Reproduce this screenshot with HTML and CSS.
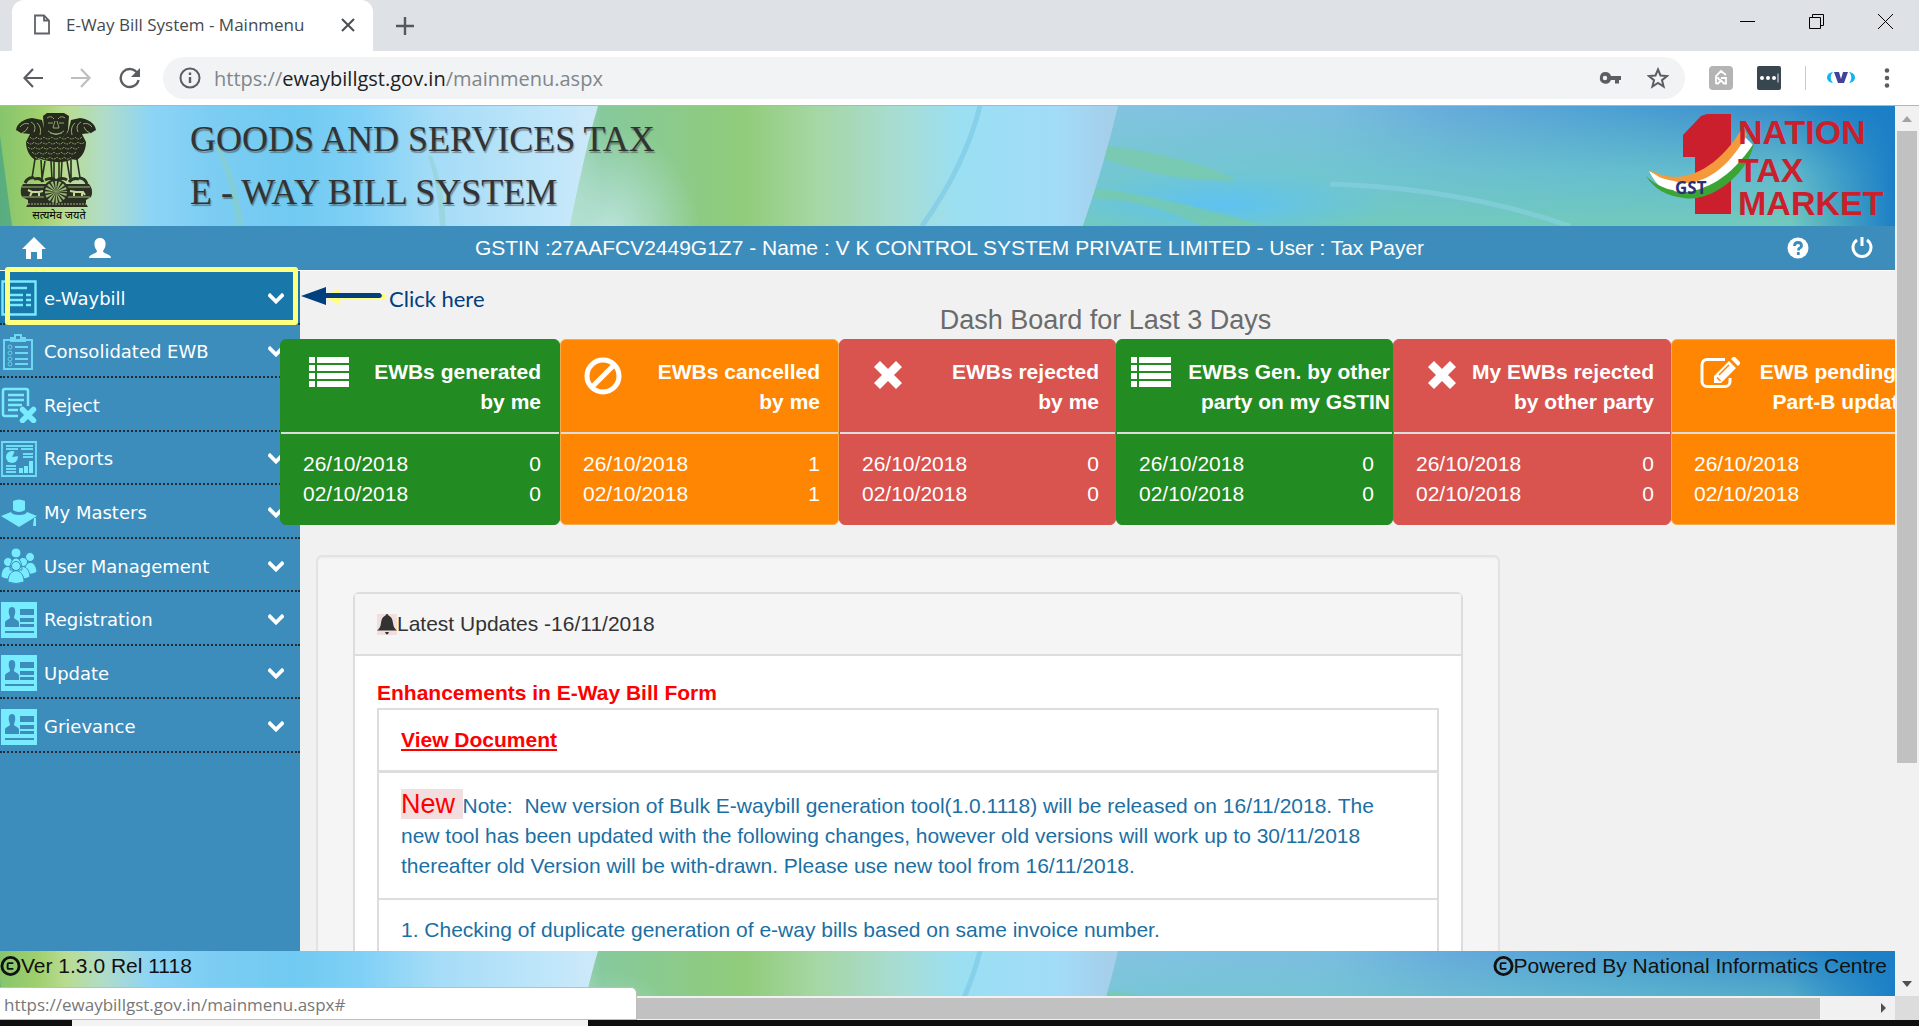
FILE: index.html
```html
<!DOCTYPE html>
<html lang="en">
<head>
    <meta charset="UTF-8">
    <title>E-Way Bill System - Mainmenu</title>
    <link rel="stylesheet" href="styles.css">
</head>
<body>
    <svg class="defs" width="0" height="0" aria-hidden="true">
        <defs>
            <linearGradient id="sky-base" gradientUnits="userSpaceOnUse" x1="0" y1="0" x2="1895" y2="0">
                <stop offset="0" stop-color="#86c56c"/>
                <stop offset=".02" stop-color="#a0cf6c"/>
                <stop offset=".035" stop-color="#b9dc92"/>
                <stop offset=".055" stop-color="#b0dcc8"/>
                <stop offset=".08" stop-color="#8cd4f6"/>
                <stop offset=".11" stop-color="#7dcdf3"/>
                <stop offset=".155" stop-color="#70caf1"/>
                <stop offset=".19" stop-color="#7fd0f6"/>
                <stop offset=".23" stop-color="#a5dcf7"/>
                <stop offset=".29" stop-color="#c0e6fa"/>
                <stop offset=".315" stop-color="#cde9f8"/>
            </linearGradient>
            <linearGradient id="sky-green" gradientUnits="userSpaceOnUse" x1="570" y1="0" x2="1110" y2="0">
                <stop offset="0" stop-color="#a4d8c4"/>
                <stop offset=".06" stop-color="#86c99c"/>
                <stop offset=".32" stop-color="#90cc7a"/>
                <stop offset=".45" stop-color="#a5d6a2"/>
                <stop offset=".6" stop-color="#a8dcd0"/>
                <stop offset=".72" stop-color="#9adff2"/>
                <stop offset=".9" stop-color="#a2dcf8"/>
                <stop offset="1" stop-color="#a5cfea"/>
            </linearGradient>
            <linearGradient id="sky-right" gradientUnits="userSpaceOnUse" x1="1090" y1="0" x2="1895" y2="0">
                <stop offset="0" stop-color="#84c4e2"/>
                <stop offset=".3" stop-color="#7abde0"/>
                <stop offset=".45" stop-color="#66aadc"/>
                <stop offset=".65" stop-color="#4c9fd4"/>
                <stop offset=".85" stop-color="#388ecb"/>
                <stop offset="1" stop-color="#147cc6"/>
            </linearGradient>
            <linearGradient id="sky-teal" x1="0" y1="0" x2="0" y2="1">
                <stop offset="0" stop-color="#6ec8c6" stop-opacity="0"/>
                <stop offset=".55" stop-color="#6ec8cc" stop-opacity=".75"/>
                <stop offset="1" stop-color="#72cabc"/>
            </linearGradient>
            <radialGradient id="sky-pale">
                <stop offset="0" stop-color="#bce4dc"/>
                <stop offset="1" stop-color="#bce4dc" stop-opacity="0"/>
            </radialGradient>
            <linearGradient id="sky-edge" x1="0" y1="0" x2="1" y2="0">
                <stop offset="0" stop-color="#1c7fc6" stop-opacity="0"/>
                <stop offset="1" stop-color="#1c7fc6"/>
            </linearGradient>
            <radialGradient id="sky-glow">
                <stop offset="0" stop-color="#5ec2f2"/>
                <stop offset="1" stop-color="#5ec2f2" stop-opacity="0"/>
            </radialGradient>
            <clipPath id="clip-green"><path d="M598 0Q586 40 570 120H1090L1120 0z"/></clipPath>
            <clipPath id="clip-right"><path d="M1118 0Q1104 60 1083 120H1895V0z"/></clipPath>
        </defs>
        <symbol id="sky" viewBox="0 0 1895 120" preserveAspectRatio="none">
            <rect width="610" height="120" fill="url(#sky-base)"/>
            <path d="M0 30v90h12z" fill="#3a9c8c" opacity=".6"/>
            <path d="M214 40q16 30 22 80h8q-8-50-24-80z" fill="#8fd0b8" opacity=".45"/>
            <path d="M432 50q12 30 14 70h-6q-2-40-12-70z" fill="#8fd0c8" opacity=".5"/>
            <g clip-path="url(#clip-green)">
                <rect x="560" width="570" height="120" fill="url(#sky-green)"/>
                <ellipse cx="610" cy="130" rx="90" ry="110" fill="url(#sky-pale)"/>
            </g>
            <path d="M980 0Q965 60 922 120" fill="none" stroke="#79c6e4" stroke-width="5" opacity=".6"/>
            <g clip-path="url(#clip-right)">
                <rect x="1080" width="815" height="120" fill="url(#sky-right)"/>
                <rect x="1080" width="815" height="120" fill="url(#sky-teal)"/>
                <ellipse cx="1220" cy="98" rx="170" ry="34" fill="url(#sky-glow)"/>
                <path d="M1108 40q70 8 130 34q-60 4-136-22z" fill="#7ccb9c" opacity=".6"/>
                <path d="M1094 82q80 10 170 38h-60q-60-26-112-28z" fill="#7ccb9c" opacity=".6"/>
                <path d="M1330 78q130 4 240 42" fill="none" stroke="#8ed4e8" stroke-width="5" opacity=".5"/>
            </g>
            <rect x="1790" width="105" height="120" fill="url(#sky-edge)"/>
        </symbol>
        <symbol id="i-chevron" viewBox="0 0 16 11">
            <path d="M2 2.5l6 6 6-6" fill="none" stroke="#fff" stroke-width="3.8" stroke-linecap="square"/>
        </symbol>
        <symbol id="i-list" viewBox="0 0 40 30">
            <path d="M0 0h6v6H0zM8 0h32v6H8zM0 8h6v6H0zM8 8h32v6H8zM0 16h6v6H0zM8 16h32v6H8zM0 24h6v6H0zM8 24h32v6H8z" fill="#fff"/>
        </symbol>
        <symbol id="i-ban" viewBox="0 0 38 38">
            <circle cx="19" cy="19" r="16" fill="none" stroke="#fff" stroke-width="5"/>
            <path d="M30 8L8 30" stroke="#fff" stroke-width="5"/>
        </symbol>
        <symbol id="i-cross" viewBox="0 0 28 28">
            <path d="M6 6l16 16M22 6L6 22" stroke="#fff" stroke-width="8.5" stroke-linecap="square"/>
        </symbol>
        <symbol id="i-edit" viewBox="0 0 40 32">
            <path d="M25 2.5H7a5 5 0 0 0-5 5v17a5 5 0 0 0 5 5h18a5 5 0 0 0 5-5V21" fill="none" stroke="#fff" stroke-width="3"/>
            <path d="M14 26v-7L29 4l7 7-15 15zM31 2l2-2q1-.6 2 0l5 5q.6 1 0 2l-2 2z" fill="#fff"/>
            <path d="M17 20.5l3.5 3.5M19 18L29 8" stroke="#ff8603" stroke-width="1.5"/>
        </symbol>
        <symbol id="i-copyright" viewBox="0 0 22 22">
            <circle cx="11" cy="11" r="9" fill="none" stroke="currentColor" stroke-width="3"/>
            <path d="M14 8H9q-1 0-1 1v4q0 1 1 1h5" fill="none" stroke="currentColor" stroke-width="2"/>
        </symbol>
        <symbol id="i-idcard" viewBox="0 0 36 36">
            <path d="M0 0h36v36H0z" fill="#78ecff"/>
            <path d="M11 5c3 0 3.500 3 3.200 6-.3 2-1.200 3-1.200 5 2 2 5 2 5 5v4H4v-4c0-3 3-3 5-5 0-2-1-3-1.200-5C7.500 8 8 5 11 5zM19 7h14v6H19zM19 16h14v4H19zM19 22h14v3H19zM4 29h29v2H4z" fill="#3c8dbb"/>
        </symbol>
    </svg>

    <div class="tabstrip">
        <div class="tab">
            <svg class="tab-page" viewBox="0 0 16 20"><path d="M1 1h9l5 5v13H1zM10 1v5h5" fill="none" stroke="#5f6368" stroke-width="1.8"/></svg>
            <span class="tab-title">E-Way Bill System - Mainmenu</span>
            <button class="icon-btn" aria-label="Close tab"><svg width="14" height="14" viewBox="0 0 14 14"><path d="M1 1l12 12M13 1L1 13" stroke="#4a4d51" stroke-width="2"/></svg></button>
        </div>
        <button class="icon-btn new-tab" aria-label="New tab"><svg width="18" height="18" viewBox="0 0 18 18"><path d="M9 0v18M0 9h18" stroke="#55585c" stroke-width="2.4"/></svg></button>
        <div class="window-btns">
            <button class="icon-btn" aria-label="Minimize"><svg width="15" height="15" viewBox="0 0 15 15"><path d="M0 7.5h15" stroke="#000"/></svg></button>
            <button class="icon-btn" aria-label="Restore"><svg width="15" height="15" viewBox="0 0 15 15"><path d="M.5 3.5h11v11H.5zM3.500 3V.5h11v11H12" fill="none" stroke="#000"/></svg></button>
            <button class="icon-btn" aria-label="Close"><svg width="15" height="15" viewBox="0 0 15 15"><path d="M0 0l15 15M15 0L0 15" stroke="#000"/></svg></button>
        </div>
    </div>

    <div class="toolbar">
        <button class="icon-btn nav-btn" aria-label="Back"><svg width="20" height="20" viewBox="0 0 20 20"><path d="M20 10H2M10 1L1.500 10l8.500 9" fill="none" stroke="#5a5d62" stroke-width="2.2"/></svg></button>
        <button class="icon-btn nav-btn" aria-label="Forward"><svg width="20" height="20" viewBox="0 0 20 20"><path d="M0 10h18M10 1l8.500 9-8.500 9" fill="none" stroke="#bcbec0" stroke-width="2.2"/></svg></button>
        <button class="icon-btn" aria-label="Reload"><svg width="22" height="22" viewBox="0 0 22 22"><path d="M18.500 6.500A9 9 0 1 0 19.500 13" fill="none" stroke="#5a5d62" stroke-width="2.4"/><path d="M21 1v9h-9z" fill="#5a5d62"/></svg></button>
        <div class="address">
            <svg width="22" height="22" viewBox="0 0 22 22"><circle cx="11" cy="11" r="9.5" fill="none" stroke="#5a5d62" stroke-width="2"/><path d="M11 10v6M11 5.500V8" stroke="#5a5d62" stroke-width="2.4"/></svg>
            <span class="url">https://<b>ewaybillgst.gov.in</b>/mainmenu.aspx</span>
            <svg width="22" height="14" viewBox="0 0 22 14"><path d="M6.500 1a5.800 5.800 0 1 0 5.500 8h4v3.500h4V9h2V5H12a5.800 5.800 0 0 0-5.500-4zm-.5 3.800a2.200 2.200 0 1 1 0 4.400 2.200 2.200 0 0 1 0-4.400z" fill="#5a5d62" fill-rule="evenodd"/></svg>
            <svg width="22" height="22" viewBox="0 0 22 22"><path d="M11 2.500l2.500 6 6.500.5-5 4.200 1.600 6.300L11 16l-5.600 3.500L7 13.200 2 9l6.500-.5z" fill="none" stroke="#5a5d62" stroke-width="2"/></svg>
        </div>
        <svg width="24" height="24" viewBox="0 0 24 24"><rect width="24" height="24" rx="4" fill="#b4b4b4"/><path d="M7 18v-8l5-5 5 4M7 17.500h2l3-3 3 3h2V12h-5M9 11q0 3 3 3" fill="none" stroke="#fff" stroke-width="1.8"/></svg>
        <svg width="24" height="24" viewBox="0 0 24 24"><rect width="24" height="24" rx="2" fill="#38464f"/><circle cx="5" cy="12" r="2" fill="#fff"/><circle cx="11" cy="12" r="2" fill="#fff"/><circle cx="17" cy="12" r="2" fill="#fff"/><path d="M21 7.500v9" stroke="#a8b0b5" stroke-width="1.5"/></svg>
        <span class="tool-sep"></span>
        <svg class="profile" width="30" height="14" viewBox="0 0 30 14"><path d="M7 1C-1 2-1 11 7 12 4 9 4 4 7 1zM23 1c8 1 8 10 0 11 3-3 3-8 0-11z" fill="#10b4f0"/><path d="M8 1h5l2 7 2-7h5l-4 11h-6z" fill="#43419a"/></svg>
        <button class="icon-btn" aria-label="Menu"><svg width="6" height="20" viewBox="0 0 6 20"><circle cx="3" cy="2.5" r="2.3" fill="#5a5d62"/><circle cx="3" cy="10" r="2.3" fill="#5a5d62"/><circle cx="3" cy="17.5" r="2.3" fill="#5a5d62"/></svg></button>
    </div>

    <div class="viewport">
        <div class="page">
            <header class="banner">
                <svg class="sky"><use href="#sky"/></svg>
                <svg class="emblem" viewBox="0 0 84 110" role="img" aria-label="National emblem">
                    <g fill="#252a1c">
                        <path d="M29 3l4-3h17l5 3-1 14c-2 7-6 8-12 8s-11-2-12-8z"/>
                        <path d="M2 17c1-7 8-11 16-12l10 2 3 12 7 8-3 18-14 2c-6-4-9-11-9-18l4-8-9-1z"/>
                        <path d="M82 17c-1-7-8-11-16-12l-9 2-3 12-8 8 3 18 14 2c6-4 9-11 9-18l-4-8 9-1z"/>
                        <path d="M24 24h36l2 20q-8 6-20 5t-21-5z"/>
                    </g>
                    <g fill="none" stroke="#b4cf86" stroke-width="1" opacity=".75">
                        <path d="M33 5q4-3 7 1M44 6q3-4 7-1M34 10h5M45 10h5M41 8l-2 7h6l-2-7M34 18q8 6 16 0M36 20q6 3 12 0"/>
                        <path d="M6 14q4-5 9-3M8 20q5-2 6-6M17 9q6 3 3 10M23 10q5 4 3 12M78 14q-4-5-9-3M76 20q-5-2-6-6M67 9q-6 3-3 10M61 10q-5 4-3 12"/>
                        <path d="M16 24q3 4 7 0 3 4 7 0 4 4 8 0 4 4 8 0 4 4 8 0 4 4 7 0 3 4 7 0" stroke-dasharray="2 1"/>
                        <path d="M13 29q4 4 7 0 4 4 8 0 4 4 7 0 4 4 7 0 4 4 7 0 4 4 8 0 4 4 7 0 3 3 7 0" stroke-dasharray="2 1"/>
                        <path d="M14 34q4 4 7 0 4 4 8 0 4 4 7 0 4 4 7 0 4 4 7 0 4 4 8 0 4 4 7 0" stroke-dasharray="2 1"/>
                        <path d="M18 39q4 4 7 0 4 4 8 0 4 4 7 0 4 4 7 0 4 4 7 0 4 4 8 0" stroke-dasharray="2 1"/>
                        <path d="M21 44q4 3 7 0 4 4 8 0 4 4 7 0 4 4 7 0 4 4 7 0" stroke-dasharray="2 1"/>
                    </g>
                    <g fill="none" stroke="#2b3022" stroke-width="1.6">
                        <path d="M21 46l-3 19M27 47l1 18M31 48l-3 18M37 48l1 18M40 48v18M45 48v18M48 48l-1 18M53 48l3 18M57 47v18M63 46l3 19"/>
                        <path d="M11 70q3-6 9-5M20 66q7-2 9 3M31 67q6-3 10 0M43 67q6-3 10 0M55 69q4-5 10-3M65 65q6 0 8 6" stroke-width="3"/>
                    </g>
                    <path d="M9 71h66q5 6 2 13l-5 3v4l2 3H12l2-3v-4l-6-3q-3-7 1-13z" fill="#2b3022"/>
                    <path d="M8 74h68M8 84h68" stroke="#9dbb76" stroke-width="1"/>
                    <path d="M14 77l4 2h7l4-1M16 83l2-4M25 83v-4M56 78l6 1h7l2 3M60 83v-4M68 83v-4" stroke="#c3da9a" stroke-width="2" fill="none"/>
                    <circle cx="42" cy="79" r="12" fill="#99b775" stroke="#2b3022" stroke-width="2"/>
                    <circle cx="42" cy="79" r="6" fill="none" stroke="#2b3022" stroke-width="11" stroke-dasharray="1 1.35"/>
                    <path d="M14 91h58" stroke="#9dbb76" stroke-dasharray="2 1"/>
                    <text x="45" y="106" text-anchor="middle" class="emblem-text">सत्यमेव जयते</text>
                </svg>
                <h1 class="site-name">GOODS AND SERVICES TAX<br>E - WAY BILL SYSTEM</h1>
                <svg class="gst-logo" viewBox="0 0 240 110" role="img" aria-label="One nation, tax, market">
                    <path d="M56 3l6-2h24v100H50V44H38V22z" fill="#cb1f2d"/>
                    <path d="M4 58c28 16 66 8 92-38l12 12C85 78 55 88 38 84 22 82 12 74 4 58z" fill="#fff"/>
                    <path d="M4 56c24 16 63 10 94-42l4 8C76 68 45 74 29 68 17 66 10 63 4 56z" fill="#f59a3c"/>
                    <path d="M1 63c20 20 66 30 108-33-5 31-44 60-70 55C22 83 10 77 1 63z" fill="#3aa535"/>
                    <path d="M27 70c18 4 38 0 58-18-14 20-38 31-56 26z" fill="#fff"/>
                    <g class="logo-words">
                        <text x="93" y="31">NATION</text>
                        <text x="93" y="69">TAX</text>
                        <text x="93" y="102">MARKET</text>
                    </g>
                    <text x="30" y="81" class="logo-gst">GST</text>
                </svg>
            </header>

            <nav class="userbar">
                <a href="#" aria-label="Home"><svg width="24" height="24" viewBox="0 0 24 24"><path d="M12 1l12 12h-4v10h-5v-7H9v7H4V13H0z" fill="#fff"/></svg></a>
                <a href="#" aria-label="Profile"><svg width="24" height="24" viewBox="0 0 24 24"><path d="M12 2c4 0 6 3 5.500 7-.3 3-1.500 4-2.500 6 0 3 8 3 8 7H1c0-4 8-4 8-7-1-2-2.200-3-2.500-6C6 5 8 2 12 2z" fill="#fff"/></svg></a>
                <span class="user-info">GSTIN :27AAFCV2449G1Z7 - Name : V K CONTROL SYSTEM PRIVATE LIMITED - User : Tax Payer</span>
                <a href="#" aria-label="Help"><svg width="22" height="22" viewBox="0 0 22 22"><circle cx="11" cy="11" r="10.5" fill="#fff"/><path d="M7.500 9q0-3.500 3.500-3.500T14.500 9q0 1.500-2 2.300-1 .5-1 2.200M11.300 15v3" fill="none" stroke="#3c8dbb" stroke-width="2.8"/></svg></a>
                <a href="#" aria-label="Log out"><svg width="22" height="22" viewBox="0 0 22 22"><path d="M6 3a9 9 0 1 0 10 0M11 0v9" fill="none" stroke="#fff" stroke-width="3"/></svg></a>
            </nav>

            <div class="content">
                <ul class="sidebar">
                    <li><a href="#" class="active">
                        <svg class="menu-icon" viewBox="0 0 36 36"><path d="M1.500 1.500h33v33h-33zM10 8h16M8 15h14M8 20h14M8 25h14M25 15h5M25 20h5M25 25h5" fill="none" stroke="#78ecff" stroke-width="2.4"/></svg>
                        e-Waybill<svg class="chevron"><use href="#i-chevron"/></svg></a></li>
                    <li><a href="#">
                        <svg class="menu-icon" viewBox="0 0 36 36"><path d="M3 6h28v29H3zM10 7V4h4V1h6v3h4v3zM14 13h13M14 19h13M14 25h13M14 30h13" fill="none" stroke="#78ecff" stroke-width="2" opacity=".8"/><g fill="none" stroke="#78ecff" opacity=".7"><circle cx="9" cy="13" r="2"/><circle cx="9" cy="19" r="2"/><circle cx="9" cy="25" r="2"/><circle cx="9" cy="30" r="2"/></g></svg>
                        Consolidated EWB<svg class="chevron"><use href="#i-chevron"/></svg></a></li>
                    <li><a href="#">
                        <svg class="menu-icon" viewBox="0 0 36 36"><path d="M17 29H4q-2 0-2-2V4q0-2 2-2h21q2 0 2 2v15M7 8h16M7 13h16M7 18h14M7 23h10" fill="none" stroke="#78ecff" stroke-width="2.5"/><path d="M21.500 22.500l11 11M32.500 22.500l-11 11" stroke="#78ecff" stroke-width="5.5" stroke-linecap="round"/></svg>
                        Reject</a></li>
                    <li><a href="#">
                        <svg class="menu-icon" viewBox="0 0 36 36"><path d="M1 1h34v34H1zM5 5h27M5 8h12M20 8h12M22 13h10M22 16h10M5 25h10M5 28h10M5 31h10" fill="none" stroke="#78ecff" stroke-width="1.8" opacity=".85"/><circle cx="11" cy="16" r="6" fill="#78ecff"/><path d="M11 16l3-6 4 5z" fill="#3c8dbb"/><path d="M18 27h4v5h-4zM23 25h4v7h-4zM28 20h4v12h-4z" fill="#78ecff"/></svg>
                        Reports<svg class="chevron"><use href="#i-chevron"/></svg></a></li>
                    <li><a href="#">
                        <svg class="menu-icon" viewBox="0 0 36 36"><path d="M12 7q6-3 12 0v9q-6 4-12 0zM0 22l10-4q1 3 8 3t8-3l10 4-18 11zM33 24h2v8h-3z" fill="#78ecff"/></svg>
                        My Masters<svg class="chevron"><use href="#i-chevron"/></svg></a></li>
                    <li><a href="#">
                        <svg class="menu-icon" viewBox="0 0 36 36"><g fill="#78ecff" stroke="#3c8dbb"><circle cx="29" cy="9" r="4.5"/><path d="M23 25c0-14 12-14 13-1q-6 4-13 1z"/><circle cx="15" cy="5" r="5"/><circle cx="7" cy="14" r="4.5"/><circle cx="22" cy="14" r="4.5"/><path d="M9 22c0-16 12-16 12 0zM0 29c0-14 13-14 14 0q-8 4-14 0zM15 29c0-14 13-14 14 0q-8 4-14 0z"/><circle cx="15" cy="18" r="4.5"/><path d="M7 34c0-15 16-15 16 0q-8 3-16 0z"/></g></svg>
                        User Management<svg class="chevron"><use href="#i-chevron"/></svg></a></li>
                    <li><a href="#"><svg class="menu-icon"><use href="#i-idcard"/></svg>Registration<svg class="chevron"><use href="#i-chevron"/></svg></a></li>
                    <li><a href="#"><svg class="menu-icon"><use href="#i-idcard"/></svg>Update<svg class="chevron"><use href="#i-chevron"/></svg></a></li>
                    <li><a href="#"><svg class="menu-icon"><use href="#i-idcard"/></svg>Grievance<svg class="chevron"><use href="#i-chevron"/></svg></a></li>
                </ul>

                <main class="main">
                    <h2 class="dash-title">Dash Board for Last 3 Days</h2>
                    <div class="cards">
                        <section class="card green">
                            <div class="card-head"><svg width="40" height="30"><use href="#i-list"/></svg><h3>EWBs generated<br>by me</h3></div>
                            <dl><dt>26/10/2018</dt><dd>0</dd><dt>02/10/2018</dt><dd>0</dd></dl>
                        </section>
                        <section class="card orange">
                            <div class="card-head ban"><svg width="38" height="38"><use href="#i-ban"/></svg><h3>EWBs cancelled<br>by me</h3></div>
                            <dl><dt>26/10/2018</dt><dd>1</dd><dt>02/10/2018</dt><dd>1</dd></dl>
                        </section>
                        <section class="card red">
                            <div class="card-head"><svg width="28" height="28"><use href="#i-cross"/></svg><h3>EWBs rejected<br>by me</h3></div>
                            <dl><dt>26/10/2018</dt><dd>0</dd><dt>02/10/2018</dt><dd>0</dd></dl>
                        </section>
                        <section class="card green">
                            <div class="card-head tight"><svg width="40" height="30"><use href="#i-list"/></svg><h3>EWBs Gen. by other<br>party on my GSTIN</h3></div>
                            <dl><dt>26/10/2018</dt><dd>0</dd><dt>02/10/2018</dt><dd>0</dd></dl>
                        </section>
                        <section class="card red">
                            <div class="card-head"><svg width="28" height="28"><use href="#i-cross"/></svg><h3>My EWBs rejected<br>by other party</h3></div>
                            <dl><dt>26/10/2018</dt><dd>0</dd><dt>02/10/2018</dt><dd>0</dd></dl>
                        </section>
                        <section class="card orange">
                            <div class="card-head"><svg width="40" height="32"><use href="#i-edit"/></svg><h3>EWB pending for<br>Part-B updation</h3></div>
                            <dl><dt>26/10/2018</dt><dd>0</dd><dt>02/10/2018</dt><dd>0</dd></dl>
                        </section>
                    </div>

                    <div class="well">
                        <div class="panel">
                            <div class="panel-head"><span class="bell"><svg width="20" height="21" viewBox="0 0 20 21"><path d="M10 0q1.500 0 1.500 1.500C15 3 15.500 6 16 9c.4 4 2 6 4 7.500H0C2 15 3.600 13 4 9c.5-3 1-6 4.500-7.500Q8.500 0 10 0zM8 18h4q-1 2.500-2 2.500T8 18z" fill="#333"/></svg></span>Latest Updates -16/11/2018</div>
                            <div class="panel-body">
                                <table class="updates">
                                    <caption>Enhancements in E-Way Bill Form</caption>
                                    <tr><td><a href="#">View Document</a></td></tr>
                                    <tr class="thick"><td><span class="new">New </span>Note:&nbsp; New version of Bulk E-waybill generation tool(1.0.1118) will be released on 16/11/2018. The new tool has been updated with the following changes, however old versions will work up to 30/11/2018 thereafter old Version will be with-drawn. Please use new tool from 16/11/2018.</td></tr>
                                    <tr><td>1. Checking of duplicate generation of e-way bills based on same invoice number.</td></tr>
                                </table>
                            </div>
                        </div>
                    </div>
                </main>
            </div>

            <footer class="footer">
                <svg class="sky"><use href="#sky"/></svg>
                <span><svg width="21" height="22"><use href="#i-copyright"/></svg>Ver 1.3.0 Rel 1118</span>
                <span><svg width="21" height="22"><use href="#i-copyright"/></svg>Powered By National Informatics Centre</span>
            </footer>

            <!-- tutorial callout over the menu -->
            <div class="callout-box"></div>
            <div class="callout">
                <svg width="88" height="20" viewBox="0 0 88 20"><path d="M22 9l16-7v5h46q3 3 0 6H38v5z" fill="#ffff80"/><path d="M0 9l25-9v6h54q4 3 0 5H25v7z" fill="#00407f"/></svg>
                <span>Click here</span>
            </div>
        </div>

        <div class="vscroll">
            <svg width="24" height="24" viewBox="0 0 24 24"><path d="M7 16l5-6 5 6z" fill="#a3a3a3"/></svg>
            <div class="vthumb"></div>
            <svg width="24" height="24" viewBox="0 0 24 24"><path d="M7 9h10l-5 6z" fill="#505050"/></svg>
        </div>
        <div class="hscroll">
            <div class="hthumb"></div>
            <svg width="24" height="24" viewBox="0 0 24 24"><path d="M10 7v10l5-5z" fill="#505050"/></svg>
        </div>
        <div class="corner"></div>
        <div class="status">https://ewaybillgst.gov.in/mainmenu.aspx#</div>
    </div>
    <div class="taskbar"><span></span></div>
</body>
</html>
```

FILE: styles.css
```css
* {
    box-sizing: border-box;
}
body {
    display: flex;
    flex-direction: column;
    height: 100vh;
    margin: 0;
    overflow: hidden;
    background: #fff;
    font: 21px/30px "Liberation Sans", Arial, sans-serif;
    color: #333;
}
.defs {
    position: absolute;
}
a {
    color: inherit;
    text-decoration: none;
}
svg {
    flex: none;
}
.icon-btn {
    display: flex;
    padding: 0;
    border: 0;
    background: none;
}

/* browser frame */
.tabstrip {
    display: flex;
    align-items: center;
    flex: none;
    height: 51px;
    padding-left: 12px;
    background: #dee1e6;
}
.tab {
    display: flex;
    align-items: center;
    width: 361px;
    height: 51px;
    padding: 0 18px 2px 22px;
    border-radius: 12px 12px 0 0;
    background: #fff;
}
.tab-page {
    width: 16px;
    height: 21px;
    margin-right: 16px;
}
.tab-title {
    flex: 1;
    font: 17px "Open Sans", "Noto Sans", sans-serif;
    color: #45494d;
}
.new-tab {
    margin-left: 23px;
}
.window-btns {
    display: flex;
    gap: 54px;
    margin: 0 26px 8px auto;
}
.toolbar {
    display: flex;
    align-items: center;
    flex: none;
    height: 55px;
    padding: 0 29px 0 23px;
    gap: 24px;
    border-bottom: 1px solid #b6b4b6;
}
.nav-btn {
    margin-right: 4px;
}
.address {
    display: flex;
    align-items: center;
    flex: 1;
    height: 42px;
    margin-left: -2px;
    padding: 0 16px;
    gap: 26px;
    border-radius: 21px;
    background: #f1f3f4;
}
.url {
    flex: 1;
    margin-left: -13px;
    font: 20px "Open Sans", "Noto Sans", sans-serif;
    color: #80868b;
}
.url b {
    font-weight: normal;
    color: #202124;
}
.tool-sep {
    width: 1px;
    height: 24px;
    margin-right: -4px;
    background: #c8cacc;
}
.profile {
    margin-right: 4px;
}
.viewport {
    position: relative;
    display: grid;
    flex: 1;
    grid-template-columns: minmax(0, 1fr) 24px;
    grid-template-rows: minmax(0, 1fr) 24px;
    min-height: 0;
}
.vscroll {
    display: flex;
    flex-direction: column;
    background: #f1f1f1;
}
.vthumb {
    width: 20px;
    height: 71%;
    margin: 1px 2px auto;
    background: #c1c1c1;
}
.hscroll {
    display: flex;
    justify-content: space-between;
    padding-left: 24px;
    background: #f1f1f1;
}
.hthumb {
    width: 96%;
    margin: 2px 0 1px;
    background: #c1c1c1;
}
.corner {
    background: #dcdcdc;
}
.status {
    position: absolute;
    bottom: 0;
    left: 0;
    width: 637px;
    height: 33px;
    padding-left: 4px;
    border: 1px solid #bdbdbd;
    border-left: 0;
    border-top-right-radius: 6px;
    background: #fff;
    font: 17px/33px "Open Sans", "Noto Sans", sans-serif;
    color: #777;
}
.taskbar {
    flex: none;
    height: 6px;
    background: #0e0f0e;
}
.taskbar span {
    display: block;
    width: 516px;
    height: 6px;
    margin-left: 72px;
    background: #f3f3f3;
}

/* page */
.page {
    position: relative;
    display: flex;
    flex-direction: column;
    min-width: 0;
    background: #f1f1f1;
}
.banner {
    position: relative;
    display: flex;
    flex: none;
    height: 120px;
    padding: 7px 10px 0 14px;
}
.sky {
    position: absolute;
    top: 0;
    left: 0;
    width: 100%;
    height: 120px;
}
.emblem,
.site-name,
.gst-logo {
    position: relative;
}
.emblem {
    width: 84px;
    height: 110px;
    overflow: visible;
}
.emblem-text {
    font: 11px "Noto Sans Devanagari", "Noto Sans", sans-serif;
}
.site-name {
    flex: 1;
    margin: 0 0 0 92px;
    font: 36px/53px "Liberation Serif", "Times New Roman", serif;
    color: #333;
    text-shadow: 1px 2px 1px rgba(60, 60, 60, .5);
}
.gst-logo {
    width: 240px;
    height: 110px;
}
.logo-words {
    font: bold 34px "Liberation Sans", Arial, sans-serif;
    fill: #cb1f2d;
}
.logo-gst {
    font: bold 17px "Open Sans", sans-serif;
    fill: #2b2f7a;
}
.userbar {
    display: flex;
    align-items: center;
    flex: none;
    height: 45px;
    padding: 0 22px;
    gap: 42px;
    border-bottom: 1px solid #fff;
    background: #3c8dbb;
    color: #fff;
}
.userbar a {
    display: flex;
}
.user-info {
    flex: 1;
    text-align: center;
}
.content {
    display: flex;
    flex: 1;
    min-height: 0;
    overflow: hidden;
}
.sidebar {
    display: grid;
    align-content: start;
    grid-template-rows: repeat(9, 1fr);
    flex: none;
    width: 300px;
    margin: 0;
    padding: 0 0 198px;
    background: #3c8dbb;
    list-style: none;
    font: 18px "DejaVu Sans", Verdana, sans-serif;
    color: #fff;
}
.sidebar li {
    display: flex;
    border-bottom: 2px dotted #222d32;
}
.sidebar a {
    display: flex;
    align-items: center;
    flex: 1;
    padding: 3px 16px 0 1px;
}
.sidebar .active {
    background: #1977aa;
}
.menu-icon {
    width: 36px;
    height: 36px;
    margin-right: 7px;
}
.chevron {
    width: 16px;
    height: 11px;
    margin-left: auto;
}
.main {
    position: relative;
    flex: 1;
    min-width: 0;
    padding-left: 16px;
}
.dash-title {
    margin: 34px 0 4px;
    font-size: 27px;
    font-weight: normal;
    text-align: center;
    color: #6b6b6b;
}
.cards {
    display: grid;
    grid-template-columns: 280px 279px 277px 277px 278px 278px;
    margin-left: -36px;
    color: #fff;
}
.card {
    height: 186px;
    border: 1px solid;
    border-radius: 6px;
}
.green {
    border-color: #228b22;
    background: #228b22;
}
.orange {
    border-color: #f0ad4e;
    background: #ff8603;
}
.red {
    border-color: #d9534f;
    background: #d9534f;
}
.card-head {
    display: flex;
    justify-content: space-between;
    height: 94px;
    padding: 17px 18px 0 28px;
    border-bottom: 2px solid #ddd;
}
.card-head.ban {
    padding-left: 23px;
}
.card-head.tight {
    padding-right: 2px;
    padding-left: 14px;
}
.red .card-head {
    padding-right: 16px;
    padding-left: 34px;
}
.red .card-head svg {
    margin-top: 4px;
}
.card h3 {
    margin: 0;
    font-size: 21px;
    text-align: right;
    white-space: nowrap;
}
.card dl {
    display: grid;
    grid-template-columns: 1fr auto;
    margin: 0;
    padding: 15px 18px 0 22px;
}
.card.red dl {
    padding-right: 16px;
}
.card dd {
    margin: 0;
}
.well {
    width: 75%;
    min-height: 600px;
    margin-top: 30px;
    padding: 35px;
    border: 2px solid #e3e3e3;
    border-radius: 6px;
    background: #f5f5f5;
    box-shadow: inset 0 1px 2px rgba(0, 0, 0, .05);
}
.panel {
    border: 2px solid #ddd;
    border-radius: 6px;
    background: #fff;
}
.panel-head {
    display: flex;
    align-items: center;
    padding: 15px 22px;
    border-bottom: 2px solid #ddd;
    background: #f5f5f5;
}
.bell {
    display: flex;
    background: #f2dede;
}
.panel-body {
    min-height: 600px;
    padding: 22px;
}
.updates {
    width: 100%;
    border: 2px solid #ddd;
    border-collapse: collapse;
    color: #1c6fa3;
}
.updates caption {
    font-weight: bold;
    text-align: left;
    color: #f00;
}
.updates td {
    padding: 15px 22px;
    border: 2px solid #ddd;
}
.updates .thick td {
    padding: 16px 48px 17px 22px;
    border-top-width: 3px;
}
.updates a {
    font-weight: bold;
    text-decoration: underline;
    color: #f00;
}
.new {
    background: #f2dede;
    font-size: 27px;
    color: #f00;
}
.footer {
    position: relative;
    display: flex;
    justify-content: space-between;
    flex: none;
    height: 45px;
    padding-right: 8px;
    overflow: hidden;
    color: #111;
}
.footer span {
    position: relative;
    display: flex;
    align-items: center;
    height: 29px;
}

/* callout */
.callout-box {
    position: absolute;
    top: 161px;
    left: 5px;
    width: 293px;
    height: 58px;
    border: 5px solid #ffff80;
    border-radius: 3px;
}
.callout {
    position: absolute;
    top: 179px;
    left: 301px;
    display: flex;
    font: 22px/28px Lato, "Open Sans", sans-serif;
    color: #00407f;
}
.callout svg {
    margin-top: 2px;
}
```
